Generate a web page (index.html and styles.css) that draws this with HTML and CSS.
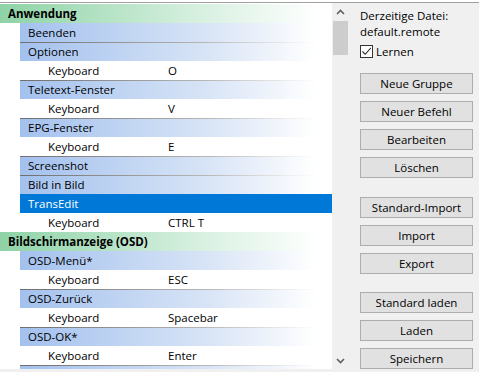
FILE: index.html
```html
<!DOCTYPE html>
<html>

<head>
    <meta charset="utf-8" />
    <title>Fernbedienung</title>
    <meta name="viewport" content="width=device-width, initial-scale=1">
    <link rel="stylesheet" href="styles.css">
</head>

<body>
    <div class="topbar"></div>
    <div class="main">
        <div class="list">
            <div class="row group">Anwendung</div>
            <div class="row cmd">Beenden</div>
            <div class="row cmd sep">Optionen</div>
            <div class="row key"><span class="k">Keyboard</span><span class="v">O</span></div>
            <div class="row cmd sep">Teletext-Fenster</div>
            <div class="row key"><span class="k">Keyboard</span><span class="v">V</span></div>
            <div class="row cmd sep">EPG-Fenster</div>
            <div class="row key"><span class="k">Keyboard</span><span class="v">E</span></div>
            <div class="row cmd sep">Screenshot</div>
            <div class="row cmd sep">Bild in Bild</div>
            <div class="row cmd selected">TransEdit</div>
            <div class="row key"><span class="k">Keyboard</span><span class="v">CTRL T</span></div>
            <div class="row group">Bildschirmanzeige (OSD)</div>
            <div class="row cmd">OSD-Menü*</div>
            <div class="row key"><span class="k">Keyboard</span><span class="v">ESC</span></div>
            <div class="row cmd sep">OSD-Zurück</div>
            <div class="row key"><span class="k">Keyboard</span><span class="v">Spacebar</span></div>
            <div class="row cmd sep">OSD-OK*</div>
            <div class="row key"><span class="k">Keyboard</span><span class="v">Enter</span></div>
            <div class="row cmd sep"></div>
        </div>
        <div class="scrollbar">
            <div class="arrow">
                <svg width="9" height="6" viewBox="0 0 9 6"><polyline points="1,5 4.5,1.5 8,5" fill="none" stroke="#606060" stroke-width="1.6"/></svg>
            </div>
            <div class="thumb"></div>
            <div class="track"></div>
            <div class="arrow">
                <svg width="9" height="6" viewBox="0 0 9 6"><polyline points="1,1 4.5,4.5 8,1" fill="none" stroke="#606060" stroke-width="1.6"/></svg>
            </div>
        </div>
        <div class="panel">
            <div class="file">
                <div>Derzeitige Datei:</div>
                <div>default.remote</div>
            </div>
            <label class="learn">
                <span class="box">
                    <svg width="11" height="11" viewBox="0 0 11 11"><polyline points="1.5,5.5 4.2,8.3 9.8,2" fill="none" stroke="#222" stroke-width="1.1"/></svg>
                </span>
                Lernen
            </label>
            <div class="buttons">
                <div class="btn">Neue Gruppe</div>
                <div class="btn">Neuer Befehl</div>
                <div class="btn">Bearbeiten</div>
                <div class="btn">Löschen</div>
            </div>
            <div class="buttons spaced">
                <div class="btn">Standard-Import</div>
                <div class="btn">Import</div>
                <div class="btn">Export</div>
            </div>
            <div class="buttons spaced2">
                <div class="btn">Standard laden</div>
                <div class="btn">Laden</div>
                <div class="btn">Speichern</div>
            </div>
        </div>
    </div>
</body>

</html>
```

FILE: styles.css
```css
/* base */

body {
    margin: 0;
    background-color: #f0f0f0;
    font-family: "Segoe UI", "Open Sans", sans-serif;
    font-size: 11.5px;
    color: #000;
}

.topbar {
    height: 2px;
    background-color: #fff;
    border-bottom: 1px solid #a0a0a0;
}

.main {
    display: flex;
    height: 366px;
}

/* list */

.list {
    width: 332px;
    height: 366px;
    padding-top: 1px;
    box-sizing: border-box;
    background-color: #fff;
    overflow: hidden;
}

.row {
    height: 19px;
    line-height: 19px;
    white-space: nowrap;
}

.group {
    padding-left: 8px;
    font-weight: bold;
    background: linear-gradient(to right, #8ed3a6, #d7f0e0 60%, #fff 96%);
}

.cmd {
    margin-left: 20px;
    padding-left: 8px;
    background: linear-gradient(to right, #a3c1ee, #d8e4f6 60%, #fff 95%);
}

.cmd.sep {
    background:
        linear-gradient(to right, #6e6e6e, #b8b8b8 60%, #fff 95%) top left / 100% 1px no-repeat,
        linear-gradient(to right, #a3c1ee, #d8e4f6 60%, #fff 95%);
}

.cmd.selected {
    background: #0078d7;
    color: #fff;
}

.key {
    display: flex;
    padding-left: 48px;
}

.key .k {
    width: 120px;
}

/* scrollbar */

.scrollbar {
    width: 17px;
    display: flex;
    flex-direction: column;
    background-color: #f0f0f0;
}

.arrow {
    height: 17px;
    display: flex;
    align-items: center;
    justify-content: center;
}

.thumb {
    height: 34px;
    margin: 1px 1px 0 1px;
    background-color: #cdcdcd;
}

.track {
    flex: 1;
}

/* right panel */

.panel {
    flex: 1;
    padding-left: 11px;
}

.file {
    margin-top: 5px;
    line-height: 16px;
}

.learn {
    display: flex;
    align-items: center;
    gap: 3px;
    margin-top: 5px;
    height: 13px;
}

.box {
    width: 11px;
    height: 11px;
    border: 1px solid #333;
    background-color: #fff;
    display: flex;
}

.buttons {
    display: flex;
    flex-direction: column;
    gap: 7px;
    margin-top: 15px;
}

.buttons.spaced {
    margin-top: 19px;
}

.buttons.spaced2 {
    margin-top: 18px;
}

.btn {
    width: 111px;
    height: 19px;
    line-height: 19px;
    text-align: center;
    background-color: #e1e1e1;
    border: 1px solid #adadad;
}
```
